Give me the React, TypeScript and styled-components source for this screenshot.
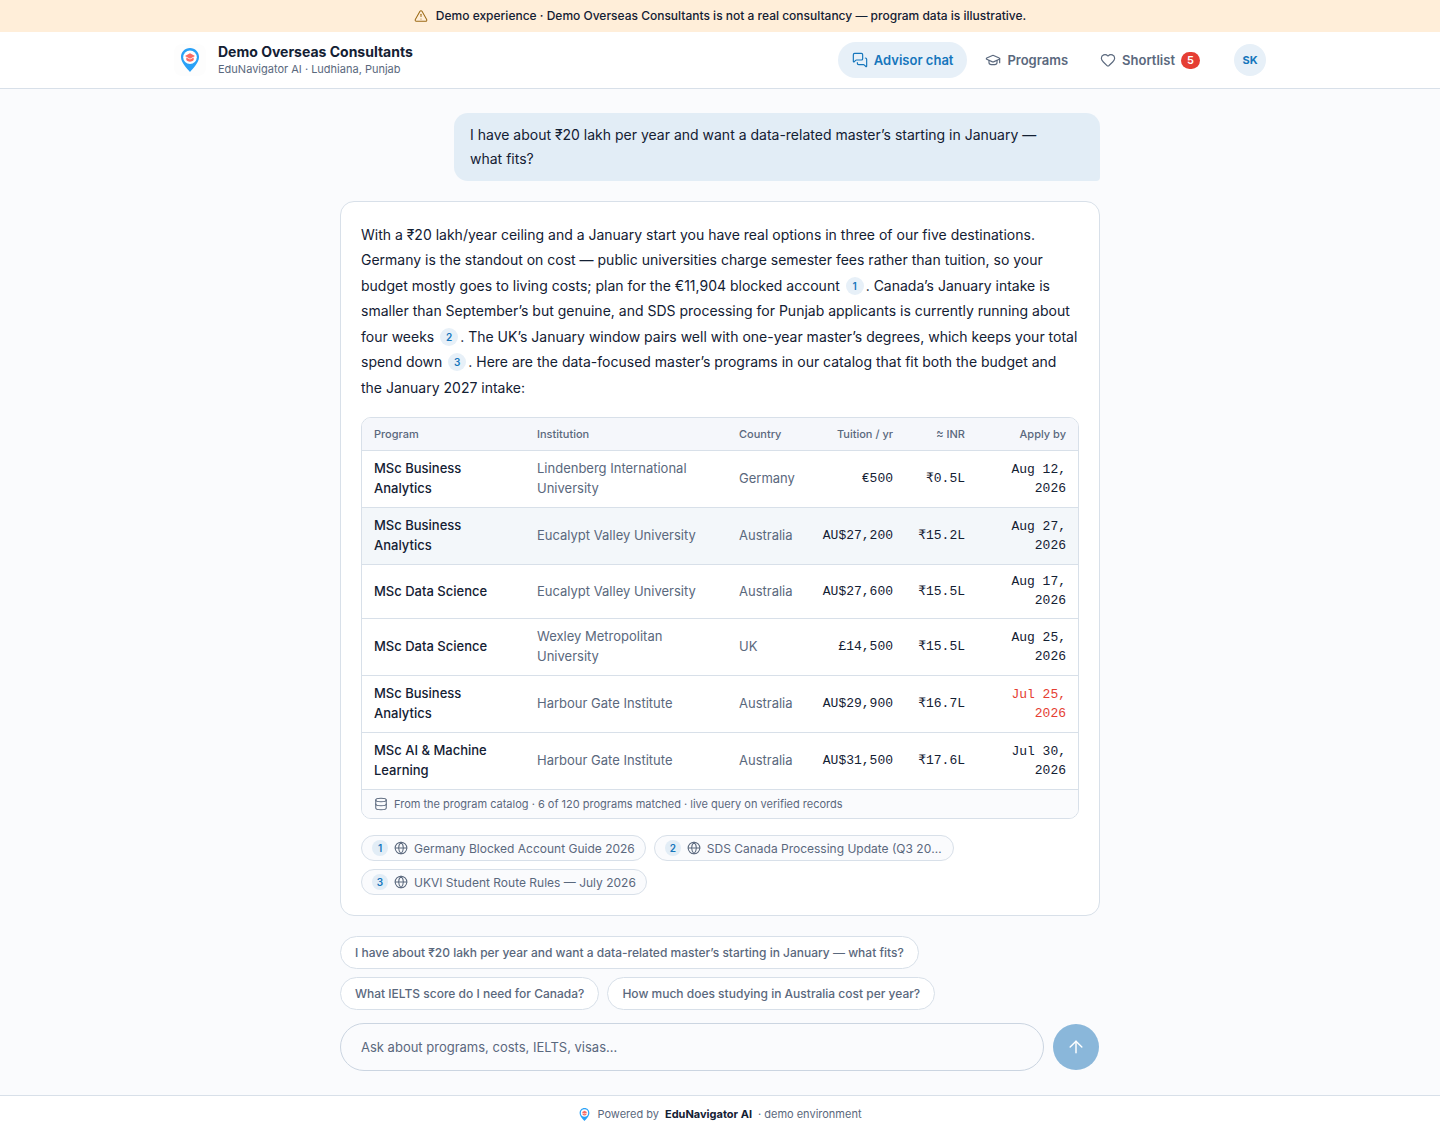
import React, { useState } from "react";
import styled, { createGlobalStyle, css } from "styled-components";
import {
  ArrowUp,
  Database,
  Globe,
  GraduationCap,
  Heart,
  MessagesSquare,
  TriangleAlert,
} from "lucide-react";

const color = {
  ink: "#132033",
  muted: "#5a687d",
  line: "#d8e0e9",
  page: "#fafbfd",
  surface: "#ffffff",
  head: "#f5f7fb",
  tint: "#e7f0f8",
  bubble: "#e2edf6",
  accent: "#1576bc",
  danger: "#e53e33",
  banner: "#ffeed9",
  warn: "#9c6a16",
};

const sans = `Inter, "Open Sans", sans-serif`;
const mono = `"Liberation Mono", monospace`;

const GlobalStyle = createGlobalStyle`
  *, *::before, *::after { box-sizing: border-box; }
  body {
    margin: 0;
    background: ${color.page};
    color: ${color.ink};
    font-family: ${sans};
    font-size: 14px;
  }
  button, input { font: inherit; color: inherit; }
`;

const Page = styled.div`
  display: flex;
  flex-direction: column;
  min-height: 100vh;
`;

const Banner = styled.div`
  display: flex;
  align-items: center;
  justify-content: center;
  gap: 8px;
  padding: 6px 16px;
  background: ${color.banner};
  font-size: 12px;
  font-weight: 500;
  line-height: 20px;
  svg { color: ${color.warn}; }
`;

const Header = styled.header`
  background: ${color.surface};
  border-bottom: 1px solid ${color.line};
`;

const HeaderInner = styled.div`
  display: flex;
  align-items: center;
  justify-content: space-between;
  max-width: 1140px;
  height: 56px;
  margin: 0 auto;
  padding: 0 24px;
`;

const Brand = styled.a`
  display: flex;
  align-items: center;
  gap: 12px;
  color: inherit;
  text-decoration: none;
`;

const LogoTile = styled.span`
  display: grid;
  place-items: center;
  width: 32px;
  height: 32px;
  border-radius: 8px;
  background: #fdfdfd;
`;

const BrandText = styled.span`
  display: flex;
  flex-direction: column;
`;

const BrandName = styled.strong`
  font-size: 14px;
  font-weight: 700;
  line-height: 18px;
`;

const BrandSub = styled.span`
  color: ${color.muted};
  font-size: 11px;
  line-height: 16px;
`;

const HeaderRight = styled.div`
  display: flex;
  align-items: center;
  gap: 20px;
`;

const Nav = styled.nav`
  display: flex;
  gap: 4px;
`;

const NavLink = styled.a<{ $active?: boolean }>`
  display: flex;
  align-items: center;
  gap: 6px;
  height: 36px;
  padding: 0 14px;
  border-radius: 18px;
  color: ${color.muted};
  font-size: 13px;
  font-weight: 600;
  text-decoration: none;
  ${(p) =>
    p.$active &&
    css`
      background: ${color.tint};
      color: ${color.accent};
    `}
`;

const Count = styled.span`
  min-width: 19px;
  padding: 0 6px;
  border-radius: 9px;
  background: ${color.danger};
  color: #fff;
  font-size: 11px;
  line-height: 17px;
  text-align: center;
`;

const Avatar = styled.button`
  width: 32px;
  height: 32px;
  padding: 0;
  border: 0;
  border-radius: 50%;
  background: ${color.tint};
  color: ${color.accent};
  font-size: 11px;
  font-weight: 700;
`;

const Main = styled.main`
  display: flex;
  flex: 1;
  flex-direction: column;
  gap: 20px;
  width: 100%;
  max-width: 808px;
  margin: 0 auto;
  padding: 24px;
`;

const UserBubble = styled.div`
  align-self: flex-end;
  max-width: 85%;
  padding: 10px 16px;
  border-radius: 14px 14px 4px 14px;
  background: ${color.bubble};
  line-height: 24px;
`;

const Answer = styled.article`
  padding: 20px;
  border: 1px solid ${color.line};
  border-radius: 14px;
  background: ${color.surface};
`;

const Paragraph = styled.p`
  margin: 0 0 17px;
  line-height: 1.82;
`;

const CiteLink = styled.a`
  display: inline-block;
  width: 18px;
  margin: 0 2px;
  border-radius: 50%;
  background: ${color.tint};
  color: ${color.accent};
  font-size: 10px;
  font-weight: 600;
  line-height: 18px;
  text-align: center;
  text-decoration: none;
  vertical-align: 1px;
`;

const TableBox = styled.div`
  overflow: hidden;
  border: 1px solid ${color.line};
  border-radius: 10px;
`;

const Table = styled.table`
  width: 100%;
  border-spacing: 0;
  table-layout: fixed;
`;

const Col = styled.col<{ $w?: number }>`
  ${(p) => p.$w && `width: ${p.$w}px;`}
`;

const HeadCell = styled.th<{ $end?: boolean }>`
  padding: 8px 12px;
  border-bottom: 1px solid ${color.line};
  background: ${color.head};
  color: ${color.muted};
  font-size: 11px;
  font-weight: 500;
  line-height: 16px;
  text-align: ${(p) => (p.$end ? "right" : "left")};
`;

const Cell = styled.td<{ $strong?: boolean }>`
  padding: 7px 12px 9px;
  border-bottom: 1px solid ${color.line};
  color: ${(p) => (p.$strong ? color.ink : color.muted)};
  font-size: 13px;
  font-weight: ${(p) => (p.$strong ? 500 : 400)};
  line-height: 20px;
`;

const NumberCell = styled.td<{ $alert?: boolean }>`
  padding: 7px 12px 8px;
  border-bottom: 1px solid ${color.line};
  color: ${(p) => (p.$alert ? color.danger : color.ink)};
  font-family: ${mono};
  font-size: 13px;
  line-height: 19px;
  text-align: right;
`;

const Row = styled.tr<{ $lit?: boolean }>`
  background: ${(p) => (p.$lit ? "#f3f7fa" : color.surface)};
`;

const TableNote = styled.div`
  display: flex;
  align-items: center;
  gap: 6px;
  padding: 6px 12px;
  background: ${color.page};
  color: ${color.muted};
  font-size: 11px;
  line-height: 16px;
`;

const Sources = styled.div`
  display: flex;
  flex-wrap: wrap;
  gap: 8px;
  margin-top: 16px;
`;

const SourceChip = styled.a`
  display: inline-flex;
  align-items: center;
  gap: 6px;
  max-width: 300px;
  height: 26px;
  padding: 0 10px;
  border: 1px solid ${color.line};
  border-radius: 13px;
  background: ${color.page};
  color: ${color.muted};
  font-size: 12px;
  text-decoration: none;
  svg { flex: none; }
`;

const SourceNumber = styled.span`
  flex: none;
  width: 16px;
  border-radius: 50%;
  background: ${color.bubble};
  color: ${color.accent};
  font-size: 10px;
  font-weight: 600;
  line-height: 16px;
  text-align: center;
`;

const SourceTitle = styled.span`
  overflow: hidden;
  text-overflow: ellipsis;
  white-space: nowrap;
`;

const Composer = styled.div`
  display: flex;
  flex-direction: column;
  gap: 13px;
`;

const Suggestions = styled.div`
  display: flex;
  flex-wrap: wrap;
  gap: 8px;
`;

const Suggestion = styled.button`
  padding: 6px 14px;
  border: 1px solid ${color.line};
  border-radius: 17px;
  background: ${color.surface};
  color: ${color.muted};
  font-size: 12px;
  font-weight: 500;
  line-height: 19px;
`;

const AskForm = styled.form`
  display: flex;
  align-items: center;
  gap: 8px;
`;

const AskInput = styled.input`
  flex: 1;
  min-width: 0;
  height: 48px;
  padding: 0 20px;
  border: 1px solid #cbd5e1;
  border-radius: 24px;
  background: ${color.page};
  font-size: 13px;
  &::placeholder { color: ${color.muted}; opacity: 1; }
`;

const SendButton = styled.button`
  display: grid;
  place-items: center;
  width: 48px;
  height: 48px;
  padding: 0;
  border: 1px solid transparent;
  border-radius: 50%;
  background: #8ab7da;
  background-clip: padding-box;
  color: #fff;
`;

const Footer = styled.footer`
  display: flex;
  align-items: center;
  justify-content: center;
  gap: 6px;
  height: 37px;
  border-top: 1px solid ${color.line};
  background: ${color.surface};
  color: ${color.muted};
  font-size: 11px;
  strong { color: ${color.ink}; font-weight: 700; }
`;

function PinLogo({ size }: { size: number }) {
  return (
    <svg width={size} height={size} viewBox="0 0 24 24" aria-hidden="true">
      <path
        d="M12 0C6.8 0 3 4 3 9c0 5.8 6 11.5 9 15 3-3.5 9-9.2 9-15 0-5-3.8-9-9-9z"
        fill="#2aa1f7"
      />
      <circle cx="12" cy="9.3" r="6.8" fill="#fff" />
      <path d="M12 5.3L17 8l-5 2.700L7 8z" fill="#fb6a63" />
      <path d="M8.3 9.5L12 11.4l3.7-1.9v2.6c-1.8 2.2-5.6 2.2-7.4 0z" fill="#fb6a63" />
    </svg>
  );
}

function Cite({ n }: { n: number }) {
  return <CiteLink href={`#source-${n}`}>{n}</CiteLink>;
}

const programs = [
  ["MSc Business Analytics", "Lindenberg International University", "Germany", "€500", "₹0.5L", "Aug 12, 2026"],
  ["MSc Business Analytics", "Eucalypt Valley University", "Australia", "AU$27,200", "₹15.2L", "Aug 27, 2026"],
  ["MSc Data Science", "Eucalypt Valley University", "Australia", "AU$27,600", "₹15.5L", "Aug 17, 2026"],
  ["MSc Data Science", "Wexley Metropolitan University", "UK", "£14,500", "₹15.5L", "Aug 25, 2026"],
  ["MSc Business Analytics", "Harbour Gate Institute", "Australia", "AU$29,900", "₹16.7L", "Jul 25, 2026"],
  ["MSc AI & Machine Learning", "Harbour Gate Institute", "Australia", "AU$31,500", "₹17.6L", "Jul 30, 2026"],
];
const highlightedRow = 1;
const closingSoonRow = 4;

const sources = [
  "Germany Blocked Account Guide 2026",
  "SDS Canada Processing Update (Q3 2026)",
  "UKVI Student Route Rules — July 2026",
];

const suggestions = [
  "I have about ₹20 lakh per year and want a data-related master’s starting in January — what fits?",
  "What IELTS score do I need for Canada?",
  "How much does studying in Australia cost per year?",
];

export default function App() {
  const [draft, setDraft] = useState("");

  return (
    <>
      <GlobalStyle />
      <Page>
        <Banner role="note">
          <TriangleAlert size={14} strokeWidth={1.75} />
          <span>
            Demo experience · Demo Overseas Consultants is not a real consultancy — program data is
            illustrative.
          </span>
        </Banner>

        <Header>
          <HeaderInner>
            <Brand href="#home">
              <LogoTile>
                <PinLogo size={24} />
              </LogoTile>
              <BrandText>
                <BrandName>Demo Overseas Consultants</BrandName>
                <BrandSub>EduNavigator AI · Ludhiana, Punjab</BrandSub>
              </BrandText>
            </Brand>
            <HeaderRight>
              <Nav>
                <NavLink href="#chat" $active aria-current="page">
                  <MessagesSquare size={16} strokeWidth={1.75} />
                  Advisor chat
                </NavLink>
                <NavLink href="#programs">
                  <GraduationCap size={16} strokeWidth={1.75} />
                  Programs
                </NavLink>
                <NavLink href="#shortlist">
                  <Heart size={16} strokeWidth={1.75} />
                  Shortlist
                  <Count>5</Count>
                </NavLink>
              </Nav>
              <Avatar type="button">SK</Avatar>
            </HeaderRight>
          </HeaderInner>
        </Header>

        <Main>
          <UserBubble>
            I have about ₹20 lakh per year and want a data-related master’s starting in January —
            what{"\u00a0"}fits?
          </UserBubble>

          <Answer>
            <Paragraph>
              With a ₹20 lakh/year ceiling and a January start you have real options in three of our
              five destinations. Germany is the standout on cost — public universities charge
              semester fees rather than tuition, so your budget mostly goes to living costs; plan
              for the €11,904 blocked account <Cite n={1} />. Canada’s January intake is smaller
              than September’s but genuine, and SDS processing for Punjab applicants is currently
              running about four weeks <Cite n={2} />. The UK’s January window pairs well with
              one-year master’s degrees, which keeps your total spend down <Cite n={3} />. Here are
              the data-focused master’s programs in our catalog that fit both the budget and the
              January 2027 intake:
            </Paragraph>

            <TableBox>
              <Table>
                <colgroup>
                  <Col $w={163} />
                  <Col />
                  <Col $w={82} />
                  <Col $w={96} />
                  <Col $w={72} />
                  <Col $w={101} />
                </colgroup>
                <thead>
                  <tr>
                    <HeadCell>Program</HeadCell>
                    <HeadCell>Institution</HeadCell>
                    <HeadCell>Country</HeadCell>
                    <HeadCell $end>Tuition / yr</HeadCell>
                    <HeadCell $end>≈ INR</HeadCell>
                    <HeadCell $end>Apply by</HeadCell>
                  </tr>
                </thead>
                <tbody>
                  {programs.map(([name, school, country, fee, inr, date], i) => (
                    <Row key={i} $lit={i === highlightedRow}>
                      <Cell $strong>{name}</Cell>
                      <Cell>{school}</Cell>
                      <Cell>{country}</Cell>
                      <NumberCell>{fee}</NumberCell>
                      <NumberCell>{inr}</NumberCell>
                      <NumberCell $alert={i === closingSoonRow}>{date}</NumberCell>
                    </Row>
                  ))}
                </tbody>
              </Table>
              <TableNote>
                <Database size={14} strokeWidth={1.75} />
                From the program catalog · 6 of 120 programs matched · live query on verified
                records
              </TableNote>
            </TableBox>

            <Sources>
              {sources.map((title, i) => (
                <SourceChip key={title} id={`source-${i + 1}`} href={`#open-${i + 1}`}>
                  <SourceNumber>{i + 1}</SourceNumber>
                  <Globe size={14} strokeWidth={1.75} />
                  <SourceTitle>{title}</SourceTitle>
                </SourceChip>
              ))}
            </Sources>
          </Answer>

          <Composer>
            <Suggestions>
              {suggestions.map((text) => (
                <Suggestion key={text} type="button" onClick={() => setDraft(text)}>
                  {text}
                </Suggestion>
              ))}
            </Suggestions>
            <AskForm onSubmit={(e) => e.preventDefault()}>
              <AskInput
                aria-label="Ask the advisor"
                placeholder="Ask about programs, costs, IELTS, visas…"
                value={draft}
                onChange={(e) => setDraft(e.target.value)}
              />
              <SendButton type="submit" aria-label="Send">
                <ArrowUp size={20} strokeWidth={1.75} />
              </SendButton>
            </AskForm>
          </Composer>
        </Main>

        <Footer>
          <PinLogo size={13} />
          <span>Powered by</span>
          <strong>EduNavigator AI</strong>
          <span>· demo environment</span>
        </Footer>
      </Page>
    </>
  );
}
